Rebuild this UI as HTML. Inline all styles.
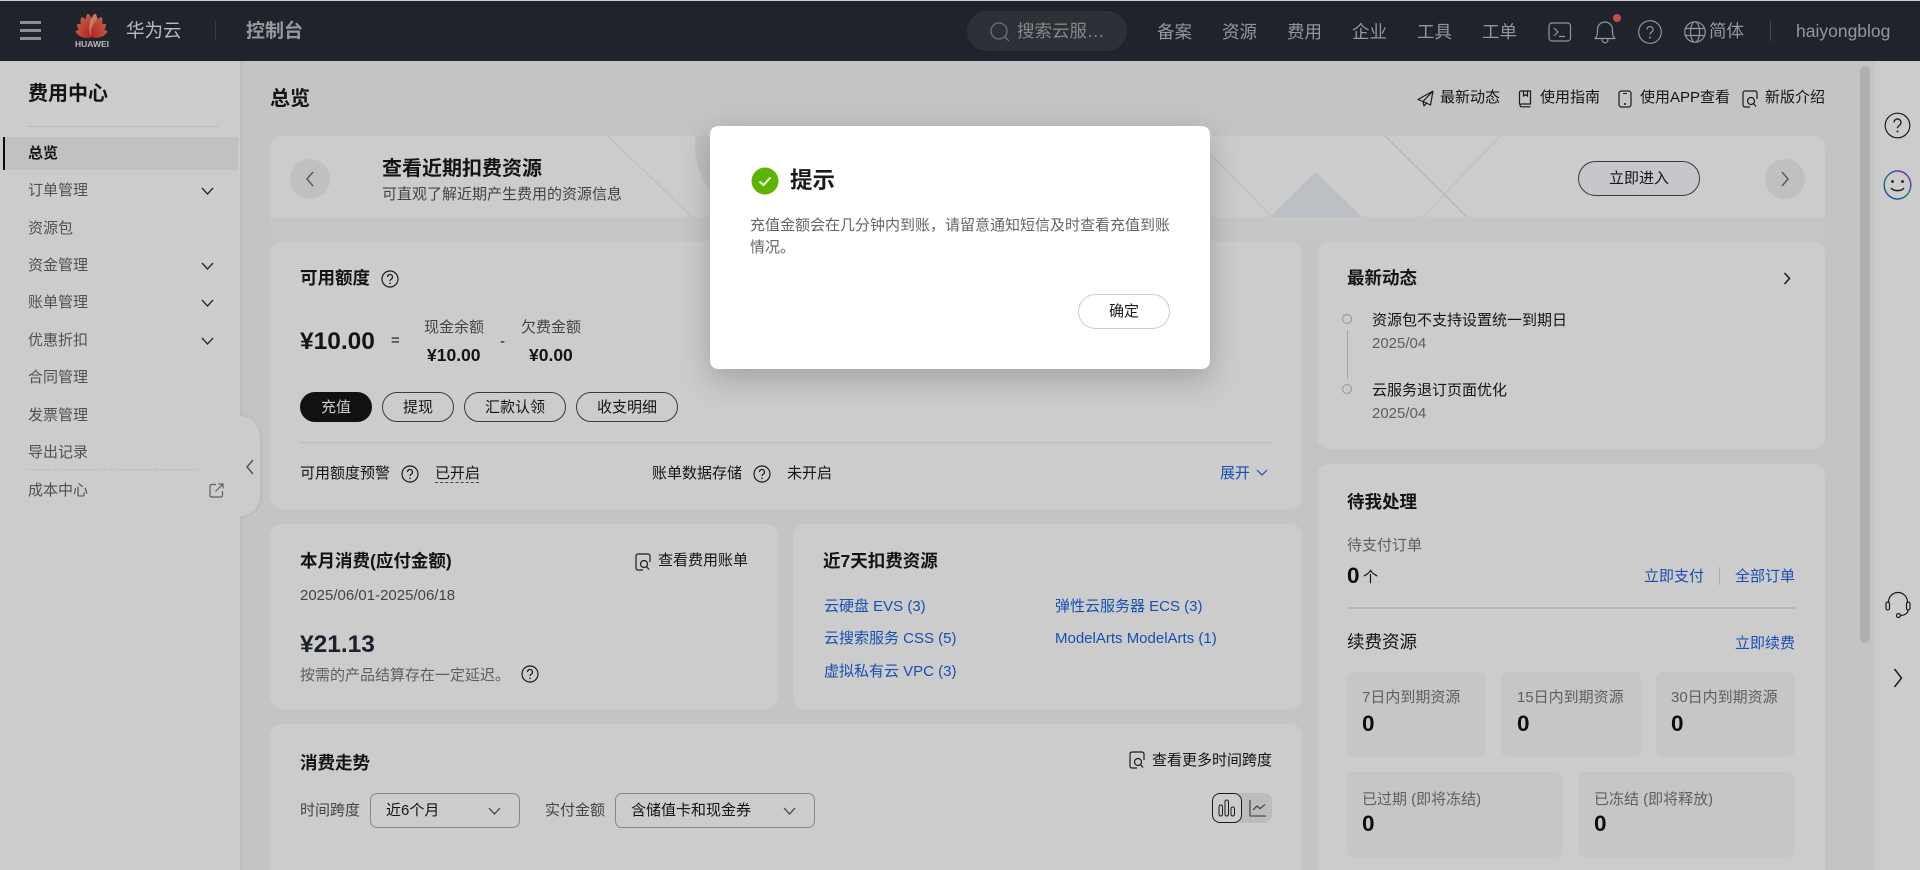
<!DOCTYPE html>
<html lang="zh-CN"><head><meta charset="utf-8"><title>费用中心</title>
<style>
html,body{margin:0;padding:0;width:1920px;height:870px;overflow:hidden;background:#f5f5f5;font-family:"Liberation Sans","Noto Sans CJK SC",sans-serif;font-size:15px;color:#1a1a1a}
#w{position:relative;width:1920px;height:870px;overflow:hidden;background:#f5f5f5}
.a{position:absolute}
.t{position:absolute;white-space:nowrap;line-height:20px}
.b{font-weight:700}
.h{font-size:17.5px;font-weight:700;color:#1a1a1a}
.g{color:#777}
.d{color:#555}
.l{color:#1f63e0}
.card{position:absolute;background:#fff;border-radius:12px}
.side{color:#666}
.nav{color:#bcbcbc;font-size:17.5px}
svg{position:absolute;overflow:visible}
.pill{position:absolute;box-sizing:border-box;border:1px solid #4a4a4a;border-radius:18px;text-align:center;line-height:29px;height:30px;top:392px}
.tile{position:absolute;background:#f8f8f8;border-radius:7px}
.num{font-size:22.5px;font-weight:700;color:#111}
.sel{position:absolute;box-sizing:border-box;border:1px solid #aaa;border-radius:7px;top:793px;height:35px}
</style></head><body><div id="w">

<!-- main background -->
<div class="a" style="left:0;top:0;width:1920px;height:1px;background:#ffffff"></div>
<div class="a" style="left:0;top:61px;width:240px;height:809px;background:#fff;box-shadow:2px 0 4px rgba(0,0,0,.05)"></div>
<div class="a" style="left:1875px;top:61px;width:45px;height:809px;background:#fff"></div>

<!-- scrollbar -->
<div class="a" style="left:1860px;top:66px;width:10px;height:577px;background:#dcdcdc;border-radius:5px"></div>

<!-- banner -->
<div class="a" style="left:270px;top:136px;width:1555px;height:81px;background:#fff;border-radius:12px 12px 0 0;overflow:hidden">
<svg style="left:0;top:0" width="1555" height="81" viewBox="0 0 1555 81">
<circle cx="505" cy="9" r="80" fill="#f0f2f6"/>
<path d="M338 0L422 81M939 17L1002 81" stroke="#eceef2" stroke-width="1.200" fill="none"/>
<path d="M1115 0L1197 81" stroke="#e4e7ec" stroke-width="1.500" fill="none"/>
<path d="M1230 0L1153 81" stroke="#f0f1f4" stroke-width="1.200" fill="none"/>
<path d="M1000 81L1045.700 36L1092 81Z" fill="#ebeff4"/>
</svg>
</div>
<div class="a" style="left:270px;top:217px;width:1555px;height:24px;background:#f8f8f9"></div>
<div class="a" style="left:290px;top:159px;width:40px;height:40px;border-radius:50%;background:#f0f0f0"></div>
<svg style="left:305px;top:171px" width="10" height="16" viewBox="0 0 10 16"><path d="M8 1L2 8L8 15" fill="none" stroke="#777" stroke-width="1.600"/></svg>
<div class="t" style="left:382px;top:159px;font-size:20px;font-weight:700">查看近期扣费资源</div>
<div class="t d" style="left:382px;top:185px">可直观了解近期产生费用的资源信息</div>
<div class="a" style="left:1578px;top:161px;width:122px;height:35px;box-sizing:border-box;border:1px solid #4a4a4a;border-radius:18px;background:#f8f9fd;text-align:center;line-height:33px">立即进入</div>
<div class="a" style="left:1765px;top:159px;width:40px;height:40px;border-radius:50%;background:#f0f0f0"></div>
<svg style="left:1780px;top:171px" width="10" height="16" viewBox="0 0 10 16"><path d="M2 1L8 8L2 15" fill="none" stroke="#777" stroke-width="1.600"/></svg>

<!-- page title + links -->
<div class="t" style="left:270px;top:89px;font-size:20px;font-weight:700">总览</div>
<svg style="left:1417px;top:90px" width="17" height="17" viewBox="0 0 17 17"><path d="M16 1L1 9.500L6 11.500L7 16L10 12.500M16 1L13.500 15L6 11.500M16 1L6 11.500" fill="none" stroke="#222" stroke-width="1.200" stroke-linejoin="round"/></svg>
<div class="t" style="left:1440px;top:88px">最新动态</div>
<svg style="left:1518px;top:90px" width="14" height="18" viewBox="0 0 14 18"><path d="M1.500 14.500V2.500a1.500 1.500 0 0 1 1.500-1.500h9.500v13H3a1.500 1.500 0 0 0 0 2.800h9.500M5.500 1v5l2-1.300l2 1.300V1" fill="none" stroke="#222" stroke-width="1.200"/></svg>
<div class="t" style="left:1540px;top:88px">使用指南</div>
<svg style="left:1618px;top:90px" width="14" height="18" viewBox="0 0 14 18"><rect x="1" y="1" width="12" height="16" rx="2.500" fill="none" stroke="#222" stroke-width="1.200"/><path d="M5 3.500H9" stroke="#222" stroke-width="1"/><circle cx="7" cy="14" r="1" fill="#222"/></svg>
<div class="t" style="left:1640px;top:88px">使用APP查看</div>
<svg style="left:1742px;top:90px" width="16" height="18" viewBox="0 0 16 18"><path d="M8 17H3a2 2 0 0 1-2-2V3a2 2 0 0 1 2-2h10a2 2 0 0 1 2 2v6" fill="none" stroke="#222" stroke-width="1.200"/><circle cx="9" cy="11" r="3.500" fill="none" stroke="#222" stroke-width="1.200"/><path d="M11.500 13.500L14 16.500" stroke="#222" stroke-width="1.200"/></svg>
<div class="t" style="left:1765px;top:88px">新版介绍</div>

<!-- cards -->
<div class="card" style="left:270px;top:241px;width:1032px;height:268px"></div>
<div class="card" style="left:1317px;top:241px;width:508px;height:208px"></div>
<div class="card" style="left:1317px;top:464px;width:508px;height:420px"></div>
<div class="card" style="left:270px;top:524px;width:508px;height:185px"></div>
<div class="card" style="left:793px;top:524px;width:509px;height:185px"></div>
<div class="card" style="left:270px;top:724px;width:1032px;height:170px"></div>

<!-- available -->
<div class="t h" style="left:300px;top:268px">可用额度</div>
<svg style="left:381px;top:270px" width="18" height="18" viewBox="0 0 18 18"><circle cx="9" cy="9" r="8" fill="none" stroke="#222" stroke-width="1.200"/><path d="M6.500 7a2.500 2.500 0 1 1 3.800 2.100c-.9.500-1.300 1-1.300 2" fill="none" stroke="#222" stroke-width="1.200"/><circle cx="9" cy="13.300" r=".8" fill="#222"/></svg>
<div class="t b" style="left:300px;top:332px;font-size:24.500px">¥10.00</div>
<div class="t" style="left:391px;top:331px;font-size:15px">=</div>
<div class="t d" style="left:424px;top:318px">现金余额</div>
<div class="t b" style="left:427px;top:345px;font-size:17.500px">¥10.00</div>
<div class="t" style="left:500px;top:332px">-</div>
<div class="t d" style="left:521px;top:318px">欠费金额</div>
<div class="t b" style="left:529px;top:345px;font-size:17.500px">¥0.00</div>
<div class="pill" style="left:300px;width:72px;background:#161616;color:#fff;border-color:#161616">充值</div>
<div class="pill" style="left:382px;width:72px">提现</div>
<div class="pill" style="left:464px;width:102px">汇款认领</div>
<div class="pill" style="left:576px;width:102px">收支明细</div>
<div class="a" style="left:300px;top:442px;width:972px;height:1px;background:#ececec"></div>
<div class="t" style="left:300px;top:464px">可用额度预警</div>
<svg style="left:401px;top:465px" width="18" height="18" viewBox="0 0 18 18"><circle cx="9" cy="9" r="8" fill="none" stroke="#222" stroke-width="1.200"/><path d="M6.500 7a2.500 2.500 0 1 1 3.800 2.100c-.9.500-1.300 1-1.300 2" fill="none" stroke="#222" stroke-width="1.200"/><circle cx="9" cy="13.300" r=".8" fill="#222"/></svg>
<div class="t" style="left:435px;top:464px">已开启</div>
<div class="a" style="left:435px;top:482px;width:44px;border-top:1px dashed #555"></div>
<div class="t" style="left:652px;top:464px">账单数据存储</div>
<svg style="left:753px;top:465px" width="18" height="18" viewBox="0 0 18 18"><circle cx="9" cy="9" r="8" fill="none" stroke="#222" stroke-width="1.200"/><path d="M6.500 7a2.500 2.500 0 1 1 3.800 2.100c-.9.500-1.300 1-1.300 2" fill="none" stroke="#222" stroke-width="1.200"/><circle cx="9" cy="13.300" r=".8" fill="#222"/></svg>
<div class="t" style="left:787px;top:464px">未开启</div>
<div class="t l" style="left:1220px;top:464px">展开</div>
<svg style="left:1256px;top:469px" width="12" height="8" viewBox="0 0 12 8"><path d="M1 1L6 6L11 1" fill="none" stroke="#1f63e0" stroke-width="1.200"/></svg>

<!-- monthly -->
<div class="t h" style="left:300px;top:551px">本月消费(应付金额)</div>
<svg style="left:635px;top:553px" width="16" height="18" viewBox="0 0 16 18"><path d="M8 17H3a2 2 0 0 1-2-2V3a2 2 0 0 1 2-2h10a2 2 0 0 1 2 2v6" fill="none" stroke="#222" stroke-width="1.200"/><circle cx="9" cy="11" r="3.500" fill="none" stroke="#222" stroke-width="1.200"/><path d="M11.500 13.500L14 16.500" stroke="#222" stroke-width="1.200"/></svg>
<div class="t" style="left:658px;top:551px">查看费用账单</div>
<div class="t d" style="left:300px;top:586px">2025/06/01-2025/06/18</div>
<div class="t b" style="left:300px;top:635px;font-size:24.500px;color:#252a3a">¥21.13</div>
<div class="t g" style="left:300px;top:666px">按需的产品结算存在一定延迟。</div>
<svg style="left:521px;top:665px" width="18" height="18" viewBox="0 0 18 18"><circle cx="9" cy="9" r="8" fill="none" stroke="#222" stroke-width="1.200"/><path d="M6.500 7a2.500 2.500 0 1 1 3.800 2.100c-.9.500-1.300 1-1.300 2" fill="none" stroke="#222" stroke-width="1.200"/><circle cx="9" cy="13.300" r=".8" fill="#222"/></svg>

<!-- 7 days -->
<div class="t h" style="left:823px;top:551px">近7天扣费资源</div>
<div class="t l" style="left:824px;top:597px">云硬盘 EVS (3)</div>
<div class="t l" style="left:1055px;top:597px">弹性云服务器 ECS (3)</div>
<div class="t l" style="left:824px;top:629px">云搜索服务 CSS (5)</div>
<div class="t l" style="left:1055px;top:629px">ModelArts ModelArts (1)</div>
<div class="t l" style="left:824px;top:662px">虚拟私有云 VPC (3)</div>

<!-- trend -->
<div class="t h" style="left:300px;top:753px">消费走势</div>
<svg style="left:1129px;top:751px" width="16" height="18" viewBox="0 0 16 18"><path d="M8 17H3a2 2 0 0 1-2-2V3a2 2 0 0 1 2-2h10a2 2 0 0 1 2 2v6" fill="none" stroke="#222" stroke-width="1.200"/><circle cx="9" cy="11" r="3.500" fill="none" stroke="#222" stroke-width="1.200"/><path d="M11.500 13.500L14 16.500" stroke="#222" stroke-width="1.200"/></svg>
<div class="t" style="left:1152px;top:751px">查看更多时间跨度</div>
<div class="t d" style="left:300px;top:801px">时间跨度</div>
<div class="sel" style="left:370px;width:150px"></div>
<div class="t" style="left:386px;top:801px">近6个月</div>
<svg style="left:488px;top:807px" width="13" height="8" viewBox="0 0 13 8"><path d="M1 1L6.500 7L12 1" fill="none" stroke="#666" stroke-width="1.300"/></svg>
<div class="t d" style="left:545px;top:801px">实付金额</div>
<div class="sel" style="left:615px;width:200px"></div>
<div class="t" style="left:631px;top:801px">含储值卡和现金券</div>
<svg style="left:783px;top:807px" width="13" height="8" viewBox="0 0 13 8"><path d="M1 1L6.500 7L12 1" fill="none" stroke="#666" stroke-width="1.300"/></svg>
<div class="a" style="left:1212px;top:793px;width:60px;height:30px;background:#ececec;border-radius:8px"></div>
<div class="a" style="left:1212px;top:793px;width:30px;height:30px;box-sizing:border-box;border:1px solid #222;border-radius:8px;background:#fff"></div>
<svg style="left:1218px;top:799px" width="18" height="18" viewBox="0 0 18 18"><rect x="1" y="6" width="3.500" height="11" rx="1.700" fill="none" stroke="#222"/><rect x="7" y="1" width="3.500" height="16" rx="1.700" fill="none" stroke="#222"/><rect x="13" y="8" width="3.500" height="9" rx="1.700" fill="none" stroke="#222"/></svg>
<svg style="left:1249px;top:799px" width="18" height="18" viewBox="0 0 18 18"><path d="M1 1V17H17M4 11L8 7L11 9.500L16 5.500" fill="none" stroke="#444" stroke-width="1.100"/></svg>

<!-- news -->
<div class="t h" style="left:1347px;top:268px">最新动态</div>
<svg style="left:1783px;top:272px" width="8" height="13" viewBox="0 0 8 13"><path d="M1.500 1L6.500 6.500L1.500 12" fill="none" stroke="#222" stroke-width="1.500"/></svg>
<div class="a" style="left:1342px;top:314px;width:10px;height:10px;box-sizing:border-box;border:1px solid #bbb;border-radius:50%"></div>
<div class="a" style="left:1347px;top:330px;width:1px;height:49px;background:#ccc"></div>
<div class="a" style="left:1342px;top:384px;width:10px;height:10px;box-sizing:border-box;border:1px solid #bbb;border-radius:50%"></div>
<div class="t" style="left:1372px;top:311px">资源包不支持设置统一到期日</div>
<div class="t g" style="left:1372px;top:334px">2025/04</div>
<div class="t" style="left:1372px;top:381px">云服务退订页面优化</div>
<div class="t g" style="left:1372px;top:404px">2025/04</div>

<!-- pending -->
<div class="t h" style="left:1347px;top:492px">待我处理</div>
<div class="t g" style="left:1347px;top:536px">待支付订单</div>
<div class="t num" style="left:1347px;top:566px">0</div>
<div class="t" style="left:1363px;top:568px">个</div>
<div class="t l" style="left:1644px;top:567px">立即支付</div>
<div class="a" style="left:1719px;top:567px;width:1px;height:18px;background:#ddd"></div>
<div class="t l" style="left:1735px;top:567px">全部订单</div>
<div class="a" style="left:1347px;top:607px;width:448px;height:2px;background:#e6e6e6"></div>
<div class="t" style="left:1347px;top:632px;font-size:17.500px">续费资源</div>
<div class="t l" style="left:1735px;top:634px">立即续费</div>

<div class="tile" style="left:1347px;top:672px;width:139px;height:85px"></div>
<div class="tile" style="left:1501px;top:672px;width:140px;height:85px"></div>
<div class="tile" style="left:1656px;top:672px;width:139px;height:85px"></div>
<div class="tile" style="left:1347px;top:772px;width:216px;height:85px"></div>
<div class="tile" style="left:1578px;top:772px;width:217px;height:85px"></div>
<div class="t g" style="left:1362px;top:688px">7日内到期资源</div><div class="t num" style="left:1362px;top:714px">0</div>
<div class="t g" style="left:1517px;top:688px">15日内到期资源</div><div class="t num" style="left:1517px;top:714px">0</div>
<div class="t g" style="left:1671px;top:688px">30日内到期资源</div><div class="t num" style="left:1671px;top:714px">0</div>
<div class="t g" style="left:1362px;top:790px">已过期 (即将冻结)</div><div class="t num" style="left:1362px;top:814px">0</div>
<div class="t g" style="left:1594px;top:790px">已冻结 (即将释放)</div><div class="t num" style="left:1594px;top:814px">0</div>

<!-- sidebar -->
<div class="t b" style="left:28px;top:84px;font-size:20px">费用中心</div>
<div class="a" style="left:28px;top:126px;width:190px;height:1px;background:#e8e8e8"></div>
<div class="a" style="left:3px;top:137px;width:235px;height:33px;background:#f2f2f2"></div>
<div class="a" style="left:3px;top:137px;width:2px;height:33px;background:#111"></div>
<div class="t b" style="left:28px;top:144px">总览</div>
<div class="t side" style="left:28px;top:181px">订单管理</div>
<div class="t side" style="left:28px;top:219px">资源包</div>
<div class="t side" style="left:28px;top:256px">资金管理</div>
<div class="t side" style="left:28px;top:293px">账单管理</div>
<div class="t side" style="left:28px;top:331px">优惠折扣</div>
<div class="t side" style="left:28px;top:368px">合同管理</div>
<div class="t side" style="left:28px;top:406px">发票管理</div>
<div class="t side" style="left:28px;top:443px">导出记录</div>
<div class="a" style="left:28px;top:469px;width:170px;border-top:1px dashed #e8e8e8"></div>
<div class="t side" style="left:28px;top:481px">成本中心</div>
<svg style="left:201px;top:187px" width="13" height="8" viewBox="0 0 13 8"><path d="M1 1L6.500 7L12 1" fill="none" stroke="#333" stroke-width="1.300"/></svg>
<svg style="left:201px;top:262px" width="13" height="8" viewBox="0 0 13 8"><path d="M1 1L6.500 7L12 1" fill="none" stroke="#333" stroke-width="1.300"/></svg>
<svg style="left:201px;top:299px" width="13" height="8" viewBox="0 0 13 8"><path d="M1 1L6.500 7L12 1" fill="none" stroke="#333" stroke-width="1.300"/></svg>
<svg style="left:201px;top:337px" width="13" height="8" viewBox="0 0 13 8"><path d="M1 1L6.500 7L12 1" fill="none" stroke="#333" stroke-width="1.300"/></svg>
<svg style="left:209px;top:483px" width="15" height="15" viewBox="0 0 15 15"><path d="M7 1.500H2.500a1.500 1.500 0 0 0-1.500 1.500v9.500a1.500 1.500 0 0 0 1.500 1.500H12a1.500 1.500 0 0 0 1.500-1.500V8M6.500 8.500L14 1M9.500 1H14V5.500" fill="none" stroke="#777" stroke-width="1.200"/></svg>
<div class="a" style="left:240px;top:416px;width:20px;height:100px;background:#fff;border-radius:0 20px 20px 0;box-shadow:1px 0 3px rgba(0,0,0,.08)"></div>
<svg style="left:245px;top:459px" width="10" height="16" viewBox="0 0 10 16"><path d="M8 1L2 8L8 15" fill="none" stroke="#666" stroke-width="1.400"/></svg>

<!-- right rail -->
<svg style="left:1884px;top:112px" width="27" height="27" viewBox="0 0 27 27"><circle cx="13.500" cy="13.500" r="12.300" fill="none" stroke="#222" stroke-width="1.200"/><path d="M10 10.500a3.500 3.500 0 1 1 5.300 3c-1.200.700-1.800 1.400-1.800 2.800" fill="none" stroke="#222" stroke-width="1.300"/><circle cx="13.500" cy="19.500" r="1" fill="#222"/></svg>
<svg style="left:1883px;top:170px" width="29" height="30" viewBox="0 0 29 30"><defs><linearGradient id="gr" x1="0.800" y1="0" x2="0.200" y2="1"><stop offset="0" stop-color="#9a34d8"/><stop offset=".55" stop-color="#2f9a9a"/><stop offset="1" stop-color="#1f5fe0"/></linearGradient></defs><ellipse cx="14.500" cy="15" rx="13.300" ry="14" fill="none" stroke="url(#gr)" stroke-width="1.500"/><circle cx="9.500" cy="11.500" r="1.400" fill="#222"/><circle cx="19.500" cy="11.500" r="1.400" fill="#222"/><path d="M8 18c2.500 3.500 10.500 3.500 13 0" fill="none" stroke="#222" stroke-width="1.400"/></svg>
<svg style="left:1885px;top:592px" width="26" height="26" viewBox="0 0 26 26"><path d="M3.500 11V10a9.500 9.500 0 0 1 19 0v1" fill="none" stroke="#222" stroke-width="1.200"/><rect x="1" y="10" width="3.500" height="8" rx="1.700" fill="none" stroke="#222" stroke-width="1.200"/><rect x="21.500" y="10" width="3.500" height="8" rx="1.700" fill="none" stroke="#222" stroke-width="1.200"/><path d="M23 18c0 3.500-3 5-7 5.500" fill="none" stroke="#222" stroke-width="1.200"/><circle cx="13.500" cy="23.500" r="2" fill="none" stroke="#222" stroke-width="1.200"/></svg>
<svg style="left:1893px;top:668px" width="10" height="20" viewBox="0 0 10 20"><path d="M1.500 1L8.500 10L1.500 19" fill="none" stroke="#222" stroke-width="1.500"/></svg>

<!-- header -->
<div class="a" style="left:0;top:1px;width:1920px;height:60px;background:#272c38"></div>
<div class="a" style="left:20px;top:21px;width:21px;height:2.500px;background:#b4b4b4"></div>
<div class="a" style="left:20px;top:29px;width:21px;height:2.500px;background:#b4b4b4"></div>
<div class="a" style="left:20px;top:37px;width:21px;height:2.500px;background:#b4b4b4"></div>
<svg style="left:72px;top:12px" width="40" height="27" viewBox="0 0 40 27">
<defs><linearGradient id="pt" x1="0" y1="0" x2="0" y2="1"><stop offset="0" stop-color="#f6705a"/><stop offset="1" stop-color="#e02c20"/></linearGradient></defs>
<g fill="url(#pt)" transform="translate(19.500 25)">
<path transform="rotate(-70) scale(.72)" d="M0 0C-6 -6 -6 -17 -1 -23Q0 -24 1 -23C6 -17 6 -6 0 0Z"/>
<path transform="rotate(-48) scale(.82)" d="M0 0C-6 -6 -6 -17 -1 -23Q0 -24 1 -23C6 -17 6 -6 0 0Z"/>
<path transform="rotate(-27) scale(.94)" d="M0 0C-6 -6 -6 -17 -1 -23Q0 -24 1 -23C6 -17 6 -6 0 0Z"/>
<path transform="rotate(-9)" d="M0 0C-5 -6 -5 -17 -1 -23Q0 -24 1 -23C5 -17 5 -6 0 0Z"/>
<path transform="rotate(9)" fill="#f59a80" d="M0 0C-5 -6 -5 -17 -1 -23Q0 -24 1 -23C5 -17 5 -6 0 0Z"/>
<path transform="rotate(27) scale(.94)" d="M0 0C-6 -6 -6 -17 -1 -23Q0 -24 1 -23C6 -17 6 -6 0 0Z"/>
<path transform="rotate(48) scale(.82)" d="M0 0C-6 -6 -6 -17 -1 -23Q0 -24 1 -23C6 -17 6 -6 0 0Z"/>
<path transform="rotate(70) scale(.72)" d="M0 0C-6 -6 -6 -17 -1 -23Q0 -24 1 -23C6 -17 6 -6 0 0Z"/>
</g></svg>
<div class="t b" style="left:75px;top:34px;font-size:8.500px;color:#e8e8e8">HUAWEI</div>
<div class="t" style="left:126px;top:21px;font-size:18.500px;color:#e8e8e8">华为云</div>
<div class="a" style="left:215px;top:21px;width:1px;height:20px;background:#444a55"></div>
<div class="t b" style="left:246px;top:22px;font-size:19px;color:#c0c0c0">控制台</div>
<div class="a" style="left:967px;top:11px;width:160px;height:40px;background:#3a3c46;border-radius:20px"></div>
<svg style="left:990px;top:22px" width="20" height="20" viewBox="0 0 20 20"><circle cx="9" cy="9" r="8" fill="none" stroke="#8c8c8c" stroke-width="1.300"/><path d="M15 15L19 19" stroke="#8c8c8c" stroke-width="1.300"/></svg>
<div class="t" style="left:1017px;top:21px;font-size:17.500px;color:#a8a8a8">搜索云服…</div>
<div class="t nav" style="left:1157px;top:22px">备案</div>
<div class="t nav" style="left:1222px;top:22px">资源</div>
<div class="t nav" style="left:1287px;top:22px">费用</div>
<div class="t nav" style="left:1352px;top:22px">企业</div>
<div class="t nav" style="left:1417px;top:22px">工具</div>
<div class="t nav" style="left:1482px;top:22px">工单</div>
<svg style="left:1548px;top:22px" width="24" height="20" viewBox="0 0 24 20"><rect x="1" y="1" width="21.500" height="18" rx="3" fill="none" stroke="#bcbcbc" stroke-width="1.200"/><path d="M6 6L10 10L6 14M11 14.500H17" fill="none" stroke="#bcbcbc" stroke-width="1.200"/></svg>
<svg style="left:1594px;top:20px" width="22" height="24" viewBox="0 0 22 24"><path d="M1 18.500C3.500 16 3.500 14 3.500 9.500a7.500 7.500 0 0 1 15 0C18.500 14 18.500 16 21 18.500ZM8 19c0 5 6 5 6 0" fill="none" stroke="#bcbcbc" stroke-width="1.200" stroke-linejoin="round"/></svg>
<div class="a" style="left:1613px;top:14px;width:8px;height:8px;border-radius:50%;background:#f8605a"></div>
<svg style="left:1638px;top:20px" width="24" height="24" viewBox="0 0 24 24"><circle cx="12" cy="12" r="11.300" fill="none" stroke="#bcbcbc" stroke-width="1.200"/><path d="M9 9.500a3 3 0 1 1 4.500 2.600c-1 .6-1.500 1.200-1.500 2.400" fill="none" stroke="#bcbcbc" stroke-width="1.200"/><circle cx="12" cy="17.500" r="1" fill="#bcbcbc"/></svg>
<svg style="left:1684px;top:21px" width="22" height="22" viewBox="0 0 22 22"><circle cx="11" cy="11" r="10.200" fill="none" stroke="#bcbcbc" stroke-width="1.200"/><ellipse cx="11" cy="11" rx="4.500" ry="10.200" fill="none" stroke="#bcbcbc" stroke-width="1.200"/><path d="M1.500 7.500H20.500M1.500 14.500H20.500" stroke="#bcbcbc" stroke-width="1.200"/></svg>
<div class="t nav" style="left:1709px;top:21px">简体</div>
<div class="a" style="left:1770px;top:21px;width:1px;height:20px;background:#5a5f6a"></div>
<div class="t nav" style="left:1796px;top:21px;font-size:17.500px">haiyongblog</div>

<!-- overlay -->
<div class="a" style="left:0;top:0;width:1920px;height:870px;background:rgba(0,0,0,.2)"></div>

<!-- modal -->
<div class="a" style="left:710px;top:126px;width:500px;height:243px;background:#fff;border-radius:8px;box-shadow:0 10px 32px rgba(0,0,0,.22)"></div>
<svg style="left:751px;top:167px" width="28" height="28" viewBox="0 0 28 28"><circle cx="14" cy="14" r="13.500" fill="#5cb300"/><path d="M8.500 14.500L12.500 18L19.500 10.500" fill="none" stroke="#fff" stroke-width="2"/></svg>
<div class="t b" style="left:790px;top:171px;font-size:22.500px">提示</div>
<div class="t" style="left:750px;top:215px;width:422px;color:#666;line-height:21.500px;white-space:normal;word-break:break-all">充值金额会在几分钟内到账，请留意通知短信及时查看充值到账情况。</div>
<div class="a" style="left:1078px;top:294px;width:92px;height:35px;box-sizing:border-box;border:1px solid #ccc;border-radius:18px;text-align:center;line-height:33px;background:#fff">确定</div>
</div></body></html>
